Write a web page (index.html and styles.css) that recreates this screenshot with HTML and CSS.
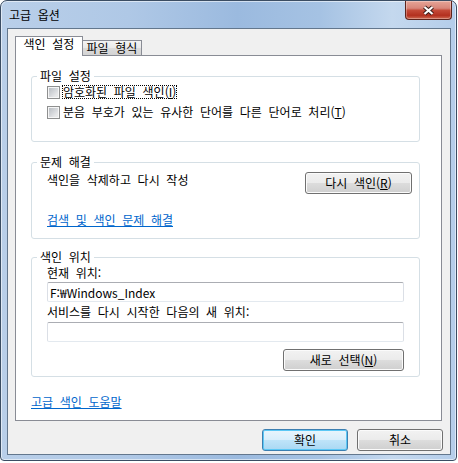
FILE: index.html
```html
<!DOCTYPE html>
<html lang="ko">
  <head>
    <meta charset="UTF-8" />
    <meta name="viewport" content="width=device-width, initial-scale=1.0" />
    <title>고급 옵션</title>
    <link rel="stylesheet" href="styles.css">
  </head>
  <body>
    <div class="window">
      <div class="titlebar">
        <span class="title">고급 옵션</span>
        <button class="close" aria-label="닫기">
          <svg width="13" height="11" viewBox="0 0 13 11">
            <path d="M2.5 2 L10.5 9 M10.5 2 L2.5 9" stroke="#3a1c18" stroke-width="4.2" fill="none" />
            <path d="M2.5 2 L10.5 9 M10.5 2 L2.5 9" stroke="#fff" stroke-width="2.2" fill="none" />
          </svg>
        </button>
      </div>

      <div class="client">
        <div class="tabs">
          <div class="tab active">색인 설정</div>
          <div class="tab">파일 형식</div>
        </div>

        <div class="page">
          <fieldset class="group first">
            <legend>파일 설정</legend>
            <div class="check">
              <span class="box"></span>
              <span class="focus">암호화된 파일 색인(<u>I</u>)</span>
            </div>
            <div class="check">
              <span class="box"></span>
              <span>분음 부호가 있는 유사한 단어를 다른 단어로 처리(<u>T</u>)</span>
            </div>
          </fieldset>

          <fieldset class="group trouble">
            <legend>문제 해결</legend>
            <div class="rebuild-row">
              <span class="rebuild-text">색인을 삭제하고 다시 작성</span>
              <button class="btn rebuild">다시 색인(<u>R</u>)</button>
            </div>
            <a class="link trouble-link" href="#">검색 및 색인 문제 해결</a>
          </fieldset>

          <fieldset class="group location">
            <legend>색인 위치</legend>
            <div class="label">현재 위치:</div>
            <input class="field" type="text" value="F:₩Windows_Index" readonly />
            <div class="label second">서비스를 다시 시작한 다음의 새 위치:</div>
            <input class="field second" type="text" value="" readonly />
            <div class="select-row">
              <button class="btn select">새로 선택(<u>N</u>)</button>
            </div>
          </fieldset>

          <a class="link help-link" href="#">고급 색인 도움말</a>
        </div>

        <div class="footer">
          <button class="btn default">확인</button>
          <button class="btn">취소</button>
        </div>
      </div>
    </div>
  </body>
</html>
```

FILE: styles.css
```css
* {
  box-sizing: border-box;
  margin: 0;
  padding: 0;
}

body {
  background: #fff;
  font-family: "Noto Sans CJK KR", "Noto Sans", sans-serif;
  font-size: 12px;
  line-height: 14px;
  word-spacing: 3.3px;
  color: #000;
}

button,
input {
  font: inherit;
  color: inherit;
  word-spacing: inherit;
}

/* window frame */
.window {
  width: 457px;
  height: 461px;
  border: 1px solid #3b4d63;
  border-radius: 7px 7px 4px 4px;
  background: linear-gradient(90deg, #b9cfe9 0%, #afc8e6 28%, #9bbadf 52%, #a5c2e3 70%, #c4d8ee 86%, #b4cdea 100%);
  box-shadow: inset 0 0 0 1px rgba(255, 255, 255, 0.55);
  display: flex;
  flex-direction: column;
}

.titlebar {
  height: 27px;
  display: flex;
  justify-content: space-between;
  align-items: flex-start;
  padding-left: 8px;
}

.title {
  margin-top: 7px;
  color: #000;
}

.close {
  width: 47px;
  height: 19px;
  margin-right: 4px;
  border: 1px solid #5e241c;
  border-top: none;
  border-radius: 0 0 4px 4px;
  background: linear-gradient(#e6a597 0%, #d8867a 40%, #c44a38 52%, #b3301f 80%, #cf6a52 100%);
  box-shadow: inset 0 0 0 1px rgba(255, 255, 255, 0.3);
  display: flex;
  align-items: center;
  justify-content: center;
}

.client {
  flex: 1;
  margin: 0 5px 5px 6px;
  border: 1px solid #63778d;
  background: #f0f0f0;
  padding: 7px 7px 0 7px;
}

/* tabs */
.tabs {
  display: flex;
  align-items: flex-end;
  height: 19px;
}

.tab {
  height: 15px;
  width: 60px;
  margin-left: -1px;
  border: 1px solid #898c95;
  border-bottom: none;
  background: linear-gradient(#f4f4f4, #e9e9e9 50%, #dcdcdc 50%, #d3d3d3);
  text-align: center;
  line-height: 14px;
}

.tab.active {
  position: relative;
  z-index: 1;
  width: 68px;
  height: 20px;
  margin-left: 0;
  margin-bottom: -1px;
  background: #fff;
}

.page {
  width: 427px;
  height: 366px;
  border: 1px solid #898c95;
  background: #fff;
  padding: 0 21px 0 15px;
}

/* group boxes */
.group {
  border: 1px solid #d5dfe5;
  border-radius: 3px;
  padding: 2px 15px 0;
  margin-top: 13px;
}

.group legend {
  margin-left: -10px;
  padding: 0 3px;
  line-height: 14px;
}

.group.first {
  padding-bottom: 22px;
}

.check {
  display: flex;
  align-items: center;
  height: 14px;
}

.check + .check {
  margin-top: 6px;
}

.box {
  width: 13px;
  height: 13px;
  margin-right: 3px;
  border: 1px solid #8e8f8f;
  background: linear-gradient(135deg, #b3b8be, #e4e5e7 70%, #efefef);
  box-shadow: inset 0 0 0 1px #f6f6f6;
  flex-shrink: 0;
}

.focus {
  margin-left: -1px;
  border: 1px dotted #000;
  line-height: 12px;
}

.group.trouble {
  padding-bottom: 11px;
}

.rebuild-row {
  display: flex;
  justify-content: space-between;
  align-items: flex-start;
  margin-top: 1px;
  margin-right: -8px;
}

.rebuild-text {
  margin-top: 1px;
}

.link {
  display: block;
  width: max-content;
  color: #0066cc;
  text-decoration: underline;
}

.trouble-link {
  margin-top: 19px;
}

.group.location {
  margin-top: 11px;
  padding-bottom: 5px;
}

.label.second {
  margin-top: 3px;
}

.field {
  display: block;
  width: 357px;
  height: 20px;
  margin-top: 2px;
  padding: 0 2px;
  border: 1px solid #dbdfe6;
  border-top-color: #abadb3;
  border-bottom-color: #e3e9ef;
  border-radius: 2px;
  background: #fff;
  outline: none;
  word-spacing: 0;
}

.field.second {
  margin-top: 3px;
}

.select-row {
  display: flex;
  justify-content: flex-end;
  width: 357px;
  margin-top: 7px;
}

.help-link {
  margin-top: 18px;
}

/* buttons */
.btn {
  height: 22px;
  width: 86px;
  border: 1px solid #707070;
  border-radius: 3px;
  background: linear-gradient(#f2f2f2 0%, #ebebeb 50%, #dddddd 50%, #cfcfcf 100%);
  box-shadow: inset 0 0 0 1px #fbfbfb;
  text-align: center;
  line-height: 14px;
}

.btn.rebuild {
  width: 107px;
}

.btn.select {
  width: 121px;
}

.btn.default {
  border-color: #3c7fb1;
  background: linear-gradient(#e9f5fc 0%, #d8eefb 50%, #bfe4f9 50%, #a9d8f3 100%);
  box-shadow: inset 0 0 0 1px #5cc8f5;
}

.footer {
  display: flex;
  justify-content: flex-end;
  gap: 9px;
  margin-top: 8px;
}
```
